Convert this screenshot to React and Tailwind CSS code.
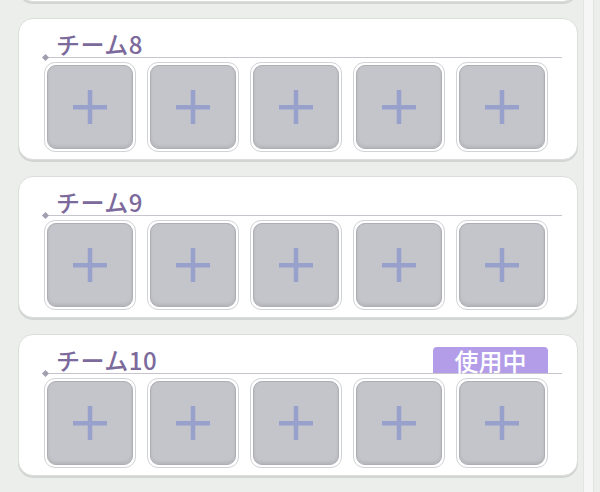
import React from "react";

const teams = [
  { name: "チーム8", active: false },
  { name: "チーム9", active: false },
  { name: "チーム10", active: true },
];

function Plus() {
  return (
    <svg width="34" height="34" viewBox="0 0 34 34">
      <rect x="0" y="15" width="34" height="4.5" fill="#98a1cc" />
      <rect x="14.75" y="0" width="4.5" height="34" fill="#98a1cc" />
    </svg>
  );
}

function Slot() {
  return (
    <div className="w-[92px] h-[90px] rounded-[11px] border border-[#d2d3d7] bg-white p-[2px]">
      <div className="w-full h-full rounded-[9px] bg-[#c4c5ca] border-[1.5px] border-[#aeafb5] shadow-[inset_0_-2px_3px_rgba(0,0,0,0.08)] flex items-center justify-center">
        <Plus />
      </div>
    </div>
  );
}

function Slots() {
  return (
    <div className="flex gap-[11px] ml-[25px] mt-[4px]">
      <Slot />
      <Slot />
      <Slot />
      <Slot />
      <Slot />
    </div>
  );
}

function TeamCard({ name, active }) {
  return (
    <div className="w-[560px] h-[142px] shrink-0 rounded-[15px] bg-white border border-[#dcdedc] shadow-[0_2px_0_#d2d5d3]">
      {/* header with underline */}
      <div className="relative ml-[27px] w-[516px] h-[39px] flex items-end border-b border-[#c7c4ce]">
        <span className="pl-[10px] pb-[1px] text-[24px] leading-[24px] tracking-[0.5px] font-medium text-[#7b6a9b] font-['Noto_Sans_CJK_JP',sans-serif]">
          {name}
        </span>
        <div className="absolute left-[-3px] bottom-[-3px] w-[5px] h-[5px] rotate-45 bg-[#a19eb0]" />
        {active && (
          <div className="absolute right-[14px] bottom-0 w-[115px] h-[26px] rounded-t-[4px] bg-[#b49de8] flex items-end justify-center text-white text-[24px] leading-[24px] font-medium font-['Noto_Sans_CJK_JP',sans-serif]">
            使用中
          </div>
        )}
      </div>
      <Slots />
    </div>
  );
}

export default function App() {
  return (
    <div className="w-[600px] h-[492px] overflow-hidden bg-[#eceeec] flex">
      <div className="flex flex-col gap-[16px] pl-[18px] mt-[-140px]">
        {/* previous team, scrolled mostly out of view */}
        <div className="w-[560px] h-[142px] shrink-0 rounded-[15px] bg-white border border-[#dcdedc] shadow-[0_2px_0_#d2d5d3] pt-[43px]">
          <Slots />
        </div>
        {teams.map((t) => (
          <TeamCard key={t.name} name={t.name} active={t.active} />
        ))}
      </div>
      <div className="ml-[5px] w-[11px] h-full bg-[#f5f6f5] border-x border-[#e2e4e2]" />
    </div>
  );
}
